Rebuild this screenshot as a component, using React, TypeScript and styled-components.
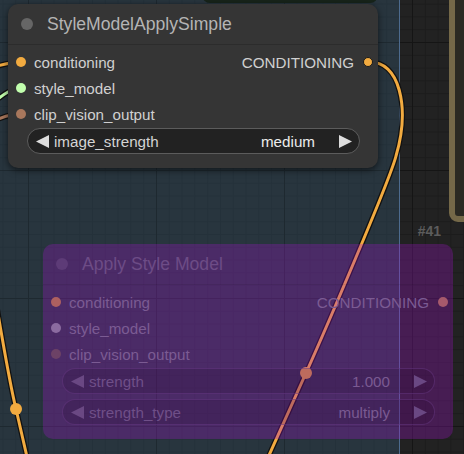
import React from "react";
import styled, { createGlobalStyle, css } from "styled-components";

const Global = createGlobalStyle`
  html, body { margin: 0; padding: 0; background: #222; }
  body { font-family: "Liberation Sans", Arial, sans-serif; }
`;

type Variant = "normal" | "bypass";

const palette = {
  normal: {
    bg: "#353535",
    title: "#b4b4b4",
    titleDot: "#666666",
    sep: "#2c2c2c",
    label: "#d0d0d0",
    widgetBg: "#222222",
    widgetBorder: "#5c5c5c",
    widgetLabel: "#d4d4d4",
    widgetValue: "#ececec",
    arrow: "#dddddd",
    shadow: "0 2px 7px rgba(0,0,0,0.6)",
  },
  bypass: {
    bg: "rgba(160, 20, 200, 0.3)",
    title: "#6d4c86",
    titleDot: "#5d3b77",
    sep: "rgba(0,0,0,0.08)",
    label: "#7b5b93",
    widgetBg: "rgba(20, 0, 30, 0.14)",
    widgetBorder: "rgba(110, 60, 140, 0.45)",
    widgetLabel: "#6f4f88",
    widgetValue: "#7a5a92",
    arrow: "#6a4883",
    shadow: "none",
  },
};

const gridBg = (bg: string, minor: string, major: string, ox: number) => css`
  background-color: ${bg};
  background-image: linear-gradient(to right, ${major} 1px, transparent 1px),
    linear-gradient(to bottom, ${major} 1px, transparent 1px),
    linear-gradient(to right, ${minor} 1px, transparent 1px),
    linear-gradient(to bottom, ${minor} 1px, transparent 1px);
  background-size: 128px 128px, 128px 128px, 12.8px 12.8px, 12.8px 12.8px;
  background-position: ${ox}px 42px, ${ox}px 42px, ${ox}px 42px, ${ox}px 42px;
`;

const Canvas = styled.div`
  position: relative;
  width: 464px;
  height: 454px;
  overflow: hidden;
  display: flex;
`;

const GroupArea = styled.div`
  width: 399px;
  height: 100%;
  border-right: 1px solid #4d6b8e;
  ${gridBg("#28353e", "#24313a", "#1e2930", 28)}
`;

const OpenArea = styled.div`
  flex: 1;
  height: 100%;
  ${gridBg("#222222", "#1c1c1c", "#151515", 12)}
`;

const Wires = styled.svg`
  position: absolute;
  left: 0;
  top: 0;
  width: 464px;
  height: 454px;
  pointer-events: none;
`;

const GreenNodeEdge = styled.div`
  position: absolute;
  left: 202px;
  top: -20px;
  width: 176px;
  height: 23px;
  background: #17241a;
  border-radius: 0 0 8px 8px;
`;

const OliveNode = styled.div`
  position: absolute;
  left: 449px;
  top: -20px;
  width: 40px;
  height: 242px;
  box-sizing: border-box;
  background: #2a2922;
  border: 6px solid #746848;
  border-radius: 9px;
`;

const NodeBox = styled.div<{ $x: number; $y: number; $w: number; $v: Variant }>`
  position: absolute;
  left: ${(p) => p.$x}px;
  top: ${(p) => p.$y}px;
  width: ${(p) => p.$w}px;
  box-sizing: border-box;
  border-radius: 10px;
  background: ${(p) => palette[p.$v].bg};
  box-shadow: ${(p) => palette[p.$v].shadow};
  display: flex;
  flex-direction: column;
  padding-bottom: 14px;
`;

const NodeId = styled.div`
  position: absolute;
  right: 12px;
  top: -21px;
  font-size: 14px;
  font-weight: bold;
  color: #5c5c5c;
`;

const TitleBar = styled.div<{ $v: Variant }>`
  box-sizing: border-box;
  height: 41px;
  display: flex;
  align-items: center;
  gap: 14px;
  padding-left: 13px;
  border-bottom: 1px solid ${(p) => palette[p.$v].sep};
`;

const TitleDot = styled.span<{ $v: Variant }>`
  width: 12px;
  height: 12px;
  border-radius: 50%;
  background: ${(p) => palette[p.$v].titleDot};
`;

const TitleText = styled.span<{ $v: Variant }>`
  font-size: 17.6px;
  color: ${(p) => palette[p.$v].title};
  white-space: nowrap;
`;

const Body = styled.div`
  display: flex;
  flex-direction: column;
  padding-top: 4px;
`;

const Row = styled.div`
  height: 26px;
  display: flex;
  align-items: center;
  justify-content: space-between;
`;

const Slot = styled.div<{ $side: "in" | "out" }>`
  display: flex;
  align-items: center;
  gap: ${(p) => (p.$side === "in" ? 8 : 9)}px;
  padding: ${(p) => (p.$side === "in" ? "0 0 0 8px" : "0 5px 0 0")};
`;

const Dot = styled.span<{ $c: string; $ring?: boolean }>`
  box-sizing: border-box;
  width: 10px;
  height: 10px;
  border-radius: 50%;
  background: ${(p) => p.$c};
  border: ${(p) => (p.$ring ? "1px solid #1a1a1a" : "none")};
`;

const SlotLabel = styled.span<{ $v: Variant }>`
  font-size: 15.2px;
  color: ${(p) => palette[p.$v].label};
  white-space: nowrap;
`;

const Widget = styled.div<{ $v: Variant }>`
  box-sizing: border-box;
  height: 26px;
  margin: 1px 18px 4px 19px;
  border-radius: 13px;
  border: 1px solid ${(p) => palette[p.$v].widgetBorder};
  background: ${(p) => palette[p.$v].widgetBg};
  display: flex;
  align-items: center;
  padding: 0 7px 0 8px;
  &:last-child {
    margin-bottom: 0;
  }
`;

const WidgetLabel = styled.span<{ $v: Variant }>`
  flex: 1;
  margin-left: 5px;
  font-size: 15.2px;
  color: ${(p) => palette[p.$v].widgetLabel};
  white-space: nowrap;
`;

const WidgetValue = styled.span<{ $v: Variant }>`
  margin-right: 24px;
  font-size: 15.2px;
  color: ${(p) => palette[p.$v].widgetValue};
  white-space: nowrap;
`;

const Arrow = ({ dir, color }: { dir: "l" | "r"; color: string }) => (
  <svg width="13" height="13" viewBox="0 0 13 13" style={{ flex: "none" }}>
    <polygon points={dir === "l" ? "0,6.5 13,0 13,13" : "13,6.5 0,0 0,13"} fill={color} />
  </svg>
);

type Input = { name: string; color: string };
type WidgetDef = { name: string; value: string };

const Node = ({
  x,
  y,
  w,
  v,
  title,
  inputs,
  output,
  widgets,
  id,
}: {
  x: number;
  y: number;
  w: number;
  v: Variant;
  title: string;
  inputs: Input[];
  output: { name: string; color: string };
  widgets: WidgetDef[];
  id?: string;
}) => (
  <NodeBox $x={x} $y={y} $w={w} $v={v}>
    {id && <NodeId>{id}</NodeId>}
    <TitleBar $v={v}>
      <TitleDot $v={v} />
      <TitleText $v={v}>{title}</TitleText>
    </TitleBar>
    <Body>
      {inputs.map((inp, i) => (
        <Row key={inp.name}>
          <Slot $side="in">
            <Dot $c={inp.color} />
            <SlotLabel $v={v}>{inp.name}</SlotLabel>
          </Slot>
          {i === 0 && (
            <Slot $side="out">
              <SlotLabel $v={v}>{output.name}</SlotLabel>
              <Dot $c={output.color} $ring={v === "normal"} />
            </Slot>
          )}
        </Row>
      ))}
      {widgets.map((wd) => (
        <Widget key={wd.name} $v={v}>
          <Arrow dir="l" color={palette[v].arrow} />
          <WidgetLabel $v={v}>{wd.name}</WidgetLabel>
          <WidgetValue $v={v}>{wd.value}</WidgetValue>
          <Arrow dir="r" color={palette[v].arrow} />
        </Widget>
      ))}
    </Body>
  </NodeBox>
);

const Link = ({ d, color }: { d: string; color: string }) => (
  <g fill="none" strokeLinecap="round">
    <path d={d} stroke="#111" strokeWidth={5.5} />
    <path d={d} stroke={color} strokeWidth={3} />
  </g>
);

export default function App() {
  const orange = "#f2ab40";
  return (
    <Canvas>
      <Global />
      <GroupArea />
      <OpenArea />
      <GreenNodeEdge />
      <OliveNode />
      <Wires viewBox="0 0 464 454">
        <Link d="M -6 67 C 4 64, 12 62, 22 62" color={orange} />
        <Link d="M -6 102 C 4 94, 12 88, 22 88" color="#c2ffae" />
        <Link d="M -6 121 C 4 116, 12 114, 22 114" color="#a8775c" />
        <Link d="M -6 290 C 4 350, 10 385, 16 409 L 30 470" color={orange} />
        <circle cx="16" cy="409" r="6" fill={orange} />
        <Link
          d="M 368 62 C 400 60, 410 108, 396 156 C 390 180, 324 333, 306 373 L 266 462"
          color={orange}
        />
        <circle cx="306" cy="373" r="6" fill={orange} />
      </Wires>
      <Node
        x={8}
        y={4}
        w={370}
        v="normal"
        title="StyleModelApplySimple"
        inputs={[
          { name: "conditioning", color: "#f2ab40" },
          { name: "style_model", color: "#c2ffae" },
          { name: "clip_vision_output", color: "#a8775c" },
        ]}
        output={{ name: "CONDITIONING", color: "#f2ab40" }}
        widgets={[{ name: "image_strength", value: "medium" }]}
      />
      <Node
        x={43}
        y={244}
        w={410}
        v="bypass"
        id="#41"
        title="Apply Style Model"
        inputs={[
          { name: "conditioning", color: "#ad6060" },
          { name: "style_model", color: "#8b6ba0" },
          { name: "clip_vision_output", color: "#6c4266" },
        ]}
        output={{ name: "CONDITIONING", color: "#a65a6c" }}
        widgets={[
          { name: "strength", value: "1.000" },
          { name: "strength_type", value: "multiply" },
        ]}
      />
    </Canvas>
  );
}
